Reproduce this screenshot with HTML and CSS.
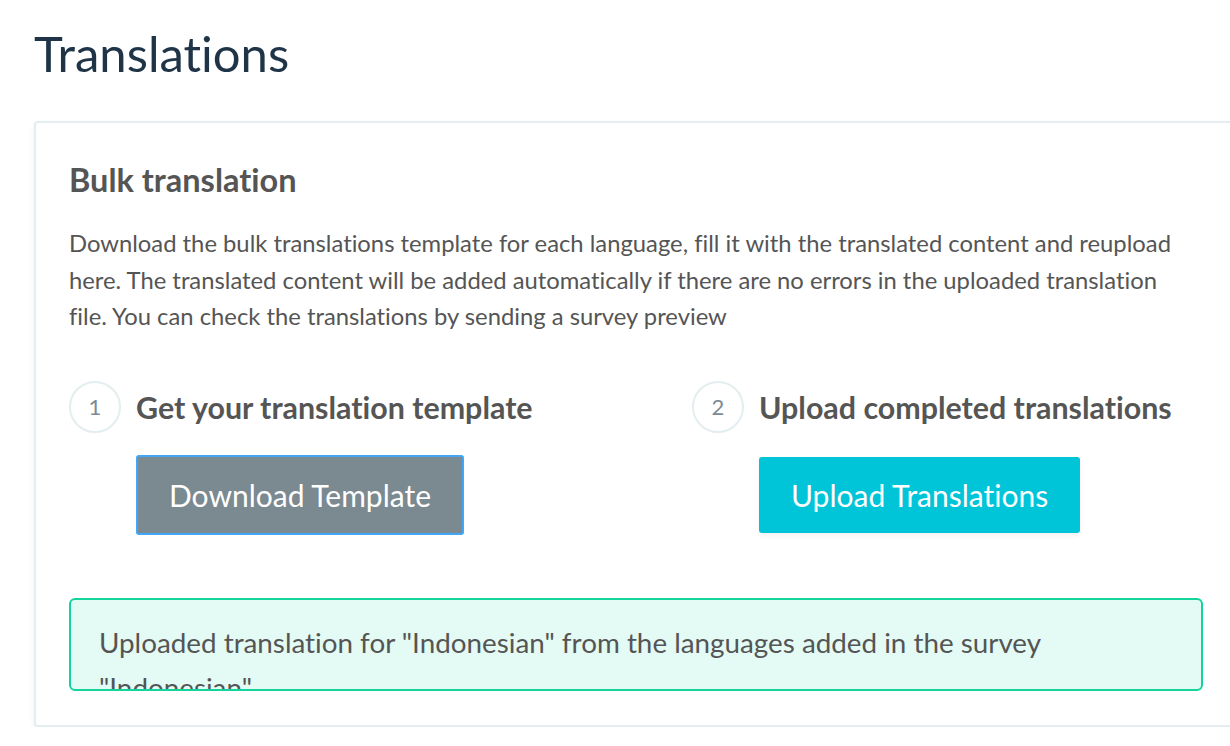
FILE: index.html
```html
<!DOCTYPE html>
<html>
<head>
<meta charset="utf-8">
<link rel="stylesheet" href="styles.css">
</head>
<body>
<h1 class="title">Translations</h1>
<div class="card">
  <h2 class="card-title">Bulk translation</h2>
  <p class="desc">Download the bulk translations template for each language, fill it with the translated content and reupload here. The translated content will be added automatically if there are no errors in the uploaded translation file. You can check the translations by sending a survey preview</p>
  <div class="steps">
    <div class="step">
      <div class="step-head">
        <span class="num">1</span>
        <span class="step-title">Get your translation template</span>
      </div>
      <button class="btn btn-gray">Download Template</button>
    </div>
    <div class="step">
      <div class="step-head">
        <span class="num">2</span>
        <span class="step-title">Upload completed translations</span>
      </div>
      <button class="btn btn-cyan">Upload Translations</button>
    </div>
  </div>
  <div class="alert">Uploaded translation for "Indonesian" from the languages added in the survey "Indonesian"</div>
</div>
</body>
</html>
```
FILE: styles.css
```css
html, body { margin: 0; padding: 0; background: #fff; }
body {
  font-family: Lato, "Noto Sans", sans-serif;
  font-variant-ligatures: none;
  color: #555;
  width: 1237px;
  overflow: hidden;
  padding: 0 0 0 34px;
  box-sizing: border-box;
}
.title {
  margin: 0;
  padding-top: 23px;
  font-size: 49px;
  font-weight: 400;
  line-height: 60px;
  color: #1f3447;
}
.card {
  margin-top: 38px;
  border: 2px solid #e4edf0;
  border-radius: 4px;
  box-shadow: 0 3px 6px rgba(0,0,0,0.06);
  padding: 38px 32px 34px 33px;
}
.card-title {
  margin: 0;
  font-size: 32.5px;
  font-weight: 700;
  line-height: 38px;
  color: #555;
}
.desc {
  margin: 26px 0 0 0;
  padding-right: 12px;
  font-size: 23.8px;
  line-height: 36.5px;
  color: #555;
}
.steps {
  display: grid;
  grid-template-columns: 623px 1fr;
  margin-top: 46px;
}
.step-head {
  display: flex;
  align-items: center;
  gap: 15px;
}
.num {
  width: 48px;
  height: 48px;
  border: 2px solid #e4edf0;
  border-radius: 50%;
  display: flex;
  align-items: center;
  justify-content: center;
  font-size: 22px;
  color: #7b8a94;
}
.step-title {
  font-size: 30.4px;
  font-weight: 700;
  color: #555;
}
.btn {
  margin: 22px 0 0 67px;
  font-family: Lato, "Noto Sans", sans-serif;
  font-variant-ligatures: none;
  font-size: 30px;
  color: #fff;
  border-radius: 3px;
  cursor: pointer;
}
.btn-gray {
  background: #7b8990;
  border: 2px solid #42a5f5;
  height: 80px;
  padding: 0 31px;
}
.btn-cyan {
  background: #00c4d8;
  border: none;
  height: 76px;
  padding: 0 32px;
  margin-top: 24px;
  box-shadow: 0 3px 6px rgba(0,0,0,0.05);
}
.alert {
  margin-top: 63px;
  height: 93px;
  overflow: hidden;
  box-sizing: border-box;
  background: #e3fbf4;
  border: 2px solid #11d59a;
  border-radius: 6px;
  padding: 20px 28px;
  font-size: 27.8px;
  line-height: 45px;
  color: #555;
}
```
